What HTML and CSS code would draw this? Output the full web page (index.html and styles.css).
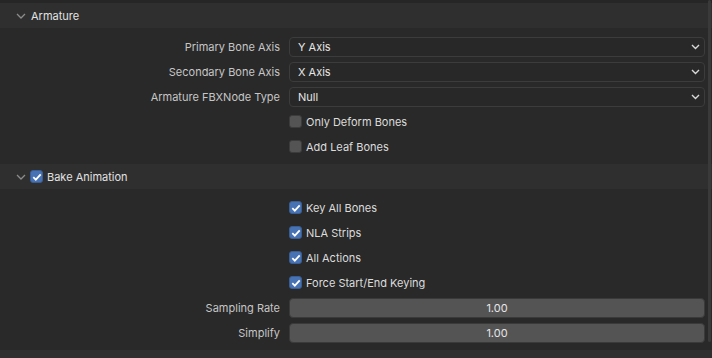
FILE: index.html
```html
<!DOCTYPE html>
<html>
<head>
<meta charset="utf-8">
<link rel="stylesheet" href="styles.css">
</head>
<body>
<div class="props">
  <div class="topstrip"></div>
  <section class="panel">
    <div class="header">
      <svg class="chev" width="10" height="6" viewBox="0 0 10 6"><path d="M1 1 L5 5 L9 1" fill="none" stroke="#8c8c8c" stroke-width="1.3"/></svg>
      <span class="htitle">Armature</span>
    </div>
    <div class="body">
      <div class="row"><span class="label">Primary Bone Axis</span><div class="field select"><span>Y Axis</span><svg class="arrow" width="9" height="6" viewBox="0 0 9 6"><path d="M1 1 L4.5 4.5 L8 1" fill="none" stroke="#d8d8d8" stroke-width="1.4"/></svg></div></div>
      <div class="row"><span class="label">Secondary Bone Axis</span><div class="field select"><span>X Axis</span><svg class="arrow" width="9" height="6" viewBox="0 0 9 6"><path d="M1 1 L4.5 4.5 L8 1" fill="none" stroke="#d8d8d8" stroke-width="1.4"/></svg></div></div>
      <div class="row"><span class="label">Armature FBXNode Type</span><div class="field select"><span>Null</span><svg class="arrow" width="9" height="6" viewBox="0 0 9 6"><path d="M1 1 L4.5 4.5 L8 1" fill="none" stroke="#d8d8d8" stroke-width="1.4"/></svg></div></div>
      <div class="row"><span class="label"></span><div class="check"><span class="box"></span><span class="ctext">Only Deform Bones</span></div></div>
      <div class="row"><span class="label"></span><div class="check"><span class="box"></span><span class="ctext">Add Leaf Bones</span></div></div>
    </div>
  </section>
  <section class="panel">
    <div class="header">
      <svg class="chev" width="10" height="6" viewBox="0 0 10 6"><path d="M1 1 L5 5 L9 1" fill="none" stroke="#8c8c8c" stroke-width="1.3"/></svg>
      <span class="box on hbox"><svg width="10" height="8" viewBox="0 0 10 8"><path d="M1.3 4.2 L3.8 6.6 L8.7 1.3" fill="none" stroke="#fff" stroke-width="1.8"/></svg></span>
      <span class="htitle">Bake Animation</span>
    </div>
    <div class="body">
      <div class="row"><span class="label"></span><div class="check"><span class="box on"><svg width="10" height="8" viewBox="0 0 10 8"><path d="M1.3 4.2 L3.8 6.6 L8.7 1.3" fill="none" stroke="#fff" stroke-width="1.8"/></svg></span><span class="ctext">Key All Bones</span></div></div>
      <div class="row"><span class="label"></span><div class="check"><span class="box on"><svg width="10" height="8" viewBox="0 0 10 8"><path d="M1.3 4.2 L3.8 6.6 L8.7 1.3" fill="none" stroke="#fff" stroke-width="1.8"/></svg></span><span class="ctext">NLA Strips</span></div></div>
      <div class="row"><span class="label"></span><div class="check"><span class="box on"><svg width="10" height="8" viewBox="0 0 10 8"><path d="M1.3 4.2 L3.8 6.6 L8.7 1.3" fill="none" stroke="#fff" stroke-width="1.8"/></svg></span><span class="ctext">All Actions</span></div></div>
      <div class="row"><span class="label"></span><div class="check"><span class="box on"><svg width="10" height="8" viewBox="0 0 10 8"><path d="M1.3 4.2 L3.8 6.6 L8.7 1.3" fill="none" stroke="#fff" stroke-width="1.8"/></svg></span><span class="ctext">Force Start/End Keying</span></div></div>
      <div class="row"><span class="label">Sampling Rate</span><div class="field num">1.00</div></div>
      <div class="row"><span class="label">Simplify</span><div class="field num">1.00</div></div>
    </div>
  </section>
  <div class="nextheader"></div>
  <div class="scrollbar"></div>
</div>
</body>
</html>
```

FILE: styles.css
```css
html, body {
  margin: 0;
  padding: 0;
  background: #282828;
}
body {
  font-family: Inter, "DejaVu Sans", sans-serif;
  font-size: 11px;
  color: #d4d4d4;
  width: 712px;
  height: 358px;
  overflow: hidden;
}
.props {
  position: relative;
  width: 712px;
  height: 358px;
  display: flex;
  flex-direction: column;
}
.topstrip {
  height: 3px;
  background: #262626;
}
.header {
  height: 25px;
  background: #2f2f2f;
  display: flex;
  align-items: center;
  padding-left: 16px;
}
.chev {
  margin-right: 5px;
  margin-top: 1px;
}
.htitle {
  color: #e2e2e2;
}
.hbox {
  margin-left: -1px;
  margin-right: 4px;
}
.body {
  background: #292929;
  padding: 6px 0 5px;
}
.row {
  height: 25px;
  display: flex;
  align-items: center;
}
.label {
  width: 280px;
  text-align: right;
  color: #c6c6c6;
  flex-shrink: 0;
}
.field {
  margin-left: 9px;
  width: 416px;
  height: 20px;
  box-sizing: border-box;
  border-radius: 4px;
  display: flex;
  align-items: center;
}
.select {
  background: #282828;
  border: 1px solid #3c3c3c;
  padding-left: 8px;
  padding-right: 4px;
  justify-content: space-between;
  color: #e6e6e6;
}
.arrow {
  margin-top: 1px;
}
.num {
  background: #545454;
  border: 1px solid #3a3a3a;
  justify-content: center;
  color: #e6e6e6;
}
.check {
  margin-left: 9px;
  display: flex;
  align-items: center;
}
.box {
  width: 13px;
  height: 13px;
  box-sizing: border-box;
  border-radius: 3px;
  background: #545454;
  border: 1px solid #3c3c3c;
  display: flex;
  align-items: center;
  justify-content: center;
  flex-shrink: 0;
}
.box.on {
  background: #4772b3;
  border-color: #3a5d93;
}
.ctext {
  margin-left: 4px;
  color: #dcdcdc;
}
.nextheader {
  flex: 1;
  background: #2f2f2f;
}
.scrollbar {
  position: absolute;
  right: 1px;
  top: 0;
  width: 3px;
  height: 342px;
  background: #3a3a3a;
  border-radius: 2px;
}
```
